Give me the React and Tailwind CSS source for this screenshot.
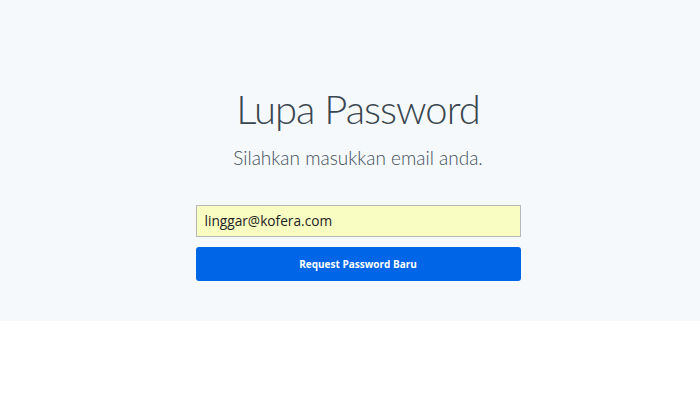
export default function App() {
  return (
    <div className="w-[700px] h-[400px] bg-white font-['Lato',sans-serif]">
      <div className="h-[321px] bg-[#f5f9fc] flex flex-col items-center pt-[84px] pl-[16px]">
        <h1 className="text-[40px] leading-[50px] font-light text-[#3a4650] tracking-[-1px]">Lupa Password</h1>
        <p className="mt-[10px] text-[19px] leading-[28px] font-light text-[#44505a]">Silahkan masukkan email anda.</p>
        <div className="mt-[33px] w-[325px] flex flex-col gap-[10px] font-['Open_Sans',sans-serif]">
          <div className="h-[32px] bg-[#fafdc2] border border-[#b8b8b8] flex items-center px-[8px] text-[13.7px] text-[#222]">
            linggar@kofera.com
          </div>
          <button className="h-[34px] bg-[#0066e8] rounded-[3px] text-white text-[10px] font-bold">
            Request Password Baru
          </button>
        </div>
      </div>
    </div>
  );
}
